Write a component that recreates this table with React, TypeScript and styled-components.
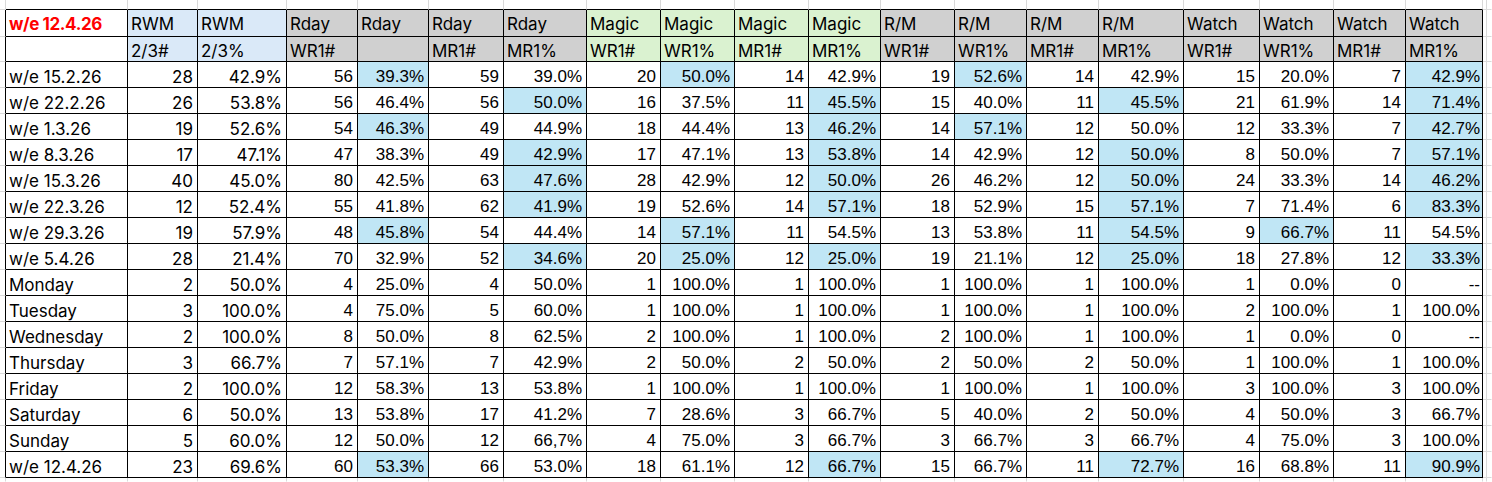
import React from "react";
import styled, { createGlobalStyle } from "styled-components";

const GlobalStyle = createGlobalStyle`
  html, body { margin: 0; padding: 0; background: #ffffff; }
  body { font-family: "Liberation Sans", Arial, sans-serif; color: #000; }
`;

const COLS = [122, 70, 89, 71, 71, 75, 83, 74, 74, 74, 72, 74, 72, 72, 85, 76, 74, 72, 77];
const TEMPLATE = `6px ${COLS.map((w) => `${w}px`).join(" ")} 4px 1fr`;

const GRID = "#d9d9d9";
const INK = "#000000";
const HL = "#c0e6f5";
const BLUE_HEAD = "#dae9f8";
const GREEN_HEAD = "#daf2d0";
const GRAY_HEAD = "#d0d0d0";

type Edge = "line" | "grid" | "none";
const edge = (e?: Edge) => (e === "line" ? INK : e === "grid" ? GRID : "transparent");

const Sheet = styled.div`
  display: flex;
  flex-direction: column;
  width: 1492px;
  height: 482px;
  overflow: hidden;
`;

const Row = styled.div<{ $h: number | "fill" }>`
  display: grid;
  grid-template-columns: ${TEMPLATE};
  flex: ${(p) => (p.$h === "fill" ? "1 1 auto" : "none")};
  height: ${(p) => (p.$h === "fill" ? "auto" : `${p.$h}px`)};
`;

const Gutter = styled.div<{ $right?: Edge; $bottom?: Edge }>`
  box-sizing: border-box;
  border-right: 1px solid ${(p) => edge(p.$right)};
  border-bottom: 1px solid ${(p) => edge(p.$bottom)};
`;

type Face = "aptos" | "arial";

const Cell = styled.div<{
  $bg?: string;
  $align?: "left" | "right";
  $face?: Face;
  $pb?: number;
  $pr?: number;
  $title?: boolean;
}>`
  box-sizing: border-box;
  border-right: 1px solid ${INK};
  border-bottom: 1px solid ${INK};
  background: ${(p) => p.$bg ?? "#ffffff"};
  display: flex;
  align-items: flex-end;
  justify-content: ${(p) => (p.$align === "right" ? "flex-end" : "flex-start")};
  padding: 0 ${(p) => p.$pr ?? 4}px ${(p) => p.$pb ?? 0}px 3px;
  white-space: nowrap;
  overflow: hidden;
  line-height: 20px;
  font-family: ${(p) =>
    p.$face === "arial"
      ? `"Liberation Sans", Arial, sans-serif`
      : `Inter, "Noto Sans", sans-serif`};
  font-size: 17px;
  font-weight: ${(p) => (p.$title ? 700 : 400)};
  letter-spacing: ${(p) => (p.$title ? "-0.4px" : "normal")};
  color: ${(p) => (p.$title ? "#ff0000" : "#000000")};
`;

const GROUP_BG = [
  "#ffffff",
  BLUE_HEAD, BLUE_HEAD,
  GRAY_HEAD, GRAY_HEAD, GRAY_HEAD, GRAY_HEAD,
  GREEN_HEAD, GREEN_HEAD, GREEN_HEAD, GREEN_HEAD,
  GRAY_HEAD, GRAY_HEAD, GRAY_HEAD, GRAY_HEAD,
  GRAY_HEAD, GRAY_HEAD, GRAY_HEAD, GRAY_HEAD,
];

const HEAD1 = [
  "w/e 12.4.26",
  "RWM", "RWM",
  "Rday", "Rday", "Rday", "Rday",
  "Magic", "Magic", "Magic", "Magic",
  "R/M", "R/M", "R/M", "R/M",
  "Watch", "Watch", "Watch", "Watch",
];

const HEAD2 = [
  "",
  "2/3#", "2/3%",
  "WR1#", "", "MR1#", "MR1%",
  "WR1#", "WR1%", "MR1#", "MR1%",
  "WR1#", "WR1%", "MR1#", "MR1%",
  "WR1#", "WR1%", "MR1#", "MR1%",
];

// "*" prefix marks a highlighted (light blue) cell
const ROWS: string[][] = [
  ["w/e 15.2.26", "28", "42.9%", "56", "*39.3%", "59", "39.0%", "20", "*50.0%", "14", "42.9%", "19", "*52.6%", "14", "42.9%", "15", "20.0%", "7", "*42.9%"],
  ["w/e 22.2.26", "26", "53.8%", "56", "46.4%", "56", "*50.0%", "16", "37.5%", "11", "*45.5%", "15", "40.0%", "11", "*45.5%", "21", "61.9%", "14", "*71.4%"],
  ["w/e 1.3.26", "19", "52.6%", "54", "*46.3%", "49", "44.9%", "18", "44.4%", "13", "*46.2%", "14", "*57.1%", "12", "50.0%", "12", "33.3%", "7", "*42.7%"],
  ["w/e 8.3.26", "17", "47.1%", "47", "38.3%", "49", "*42.9%", "17", "47.1%", "13", "*53.8%", "14", "42.9%", "12", "*50.0%", "8", "50.0%", "7", "*57.1%"],
  ["w/e 15.3.26", "40", "45.0%", "80", "42.5%", "63", "*47.6%", "28", "42.9%", "12", "*50.0%", "26", "46.2%", "12", "*50.0%", "24", "33.3%", "14", "*46.2%"],
  ["w/e 22.3.26", "12", "52.4%", "55", "41.8%", "62", "*41.9%", "19", "52.6%", "14", "*57.1%", "18", "52.9%", "15", "*57.1%", "7", "71.4%", "6", "*83.3%"],
  ["w/e 29.3.26", "19", "57.9%", "48", "*45.8%", "54", "44.4%", "14", "*57.1%", "11", "54.5%", "13", "53.8%", "11", "*54.5%", "9", "*66.7%", "11", "54.5%"],
  ["w/e 5.4.26", "28", "21.4%", "70", "32.9%", "52", "*34.6%", "20", "*25.0%", "12", "*25.0%", "19", "21.1%", "12", "*25.0%", "18", "27.8%", "12", "*33.3%"],
  ["Monday", "2", "50.0%", "4", "25.0%", "4", "50.0%", "1", "100.0%", "1", "100.0%", "1", "100.0%", "1", "100.0%", "1", "0.0%", "0", "--"],
  ["Tuesday", "3", "100.0%", "4", "75.0%", "5", "60.0%", "1", "100.0%", "1", "100.0%", "1", "100.0%", "1", "100.0%", "2", "100.0%", "1", "100.0%"],
  ["Wednesday", "2", "100.0%", "8", "50.0%", "8", "62.5%", "2", "100.0%", "1", "100.0%", "2", "100.0%", "1", "100.0%", "1", "0.0%", "0", "--"],
  ["Thursday", "3", "66.7%", "7", "57.1%", "7", "42.9%", "2", "50.0%", "2", "50.0%", "2", "50.0%", "2", "50.0%", "1", "100.0%", "1", "100.0%"],
  ["Friday", "2", "100.0%", "12", "58.3%", "13", "53.8%", "1", "100.0%", "1", "100.0%", "1", "100.0%", "1", "100.0%", "3", "100.0%", "3", "100.0%"],
  ["Saturday", "6", "50.0%", "13", "53.8%", "17", "41.2%", "7", "28.6%", "3", "66.7%", "5", "40.0%", "2", "50.0%", "4", "50.0%", "3", "66.7%"],
  ["Sunday", "5", "60.0%", "12", "50.0%", "12", "66,7%", "4", "75.0%", "3", "66.7%", "3", "66.7%", "3", "66.7%", "4", "75.0%", "3", "100.0%"],
  ["w/e 12.4.26", "23", "69.6%", "60", "*53.3%", "66", "53.0%", "18", "61.1%", "12", "*66.7%", "15", "66.7%", "11", "*72.7%", "16", "68.8%", "11", "*90.9%"],
];

const faceFor = (col: number): Face => (col <= 2 ? "aptos" : "arial");
const padRight = (col: number) => (col === 18 ? 2 : 4);

const TableRow: React.FC<{ h: number; children: React.ReactNode }> = ({ h, children }) => (
  <Row $h={h}>
    <Gutter $right="line" $bottom="grid" />
    {children}
    <Gutter $right="grid" $bottom="grid" />
    <Gutter $right="none" $bottom="grid" />
  </Row>
);

export default function App() {
  return (
    <>
      <GlobalStyle />
      <Sheet>
        <Row $h={10}>
          <Gutter $right="grid" $bottom="grid" />
          {COLS.map((_, i) => (
            <Gutter key={i} $right="grid" $bottom="line" />
          ))}
          <Gutter $right="grid" $bottom="grid" />
          <Gutter $right="none" $bottom="grid" />
        </Row>

        <TableRow h={27}>
          {HEAD1.map((t, i) => (
            <Cell key={i} $bg={GROUP_BG[i]} $face="aptos" $pb={2} $title={i === 0}>
              {t}
            </Cell>
          ))}
        </TableRow>

        <TableRow h={25}>
          {HEAD2.map((t, i) => (
            <Cell key={i} $bg={GROUP_BG[i]} $face="aptos" $pb={0}>
              {t}
            </Cell>
          ))}
        </TableRow>

        {ROWS.map((row, r) => (
          <TableRow key={r} h={26}>
            {row.map((v, c) => {
              const hl = v.startsWith("*");
              const text = hl ? v.slice(1) : v;
              return c === 0 ? (
                <Cell key={c} $face="aptos">
                  {text}
                </Cell>
              ) : (
                <Cell
                  key={c}
                  $align="right"
                  $face={faceFor(c)}
                  $pr={padRight(c)}
                  $bg={hl ? HL : undefined}
                >
                  {text}
                </Cell>
              );
            })}
          </TableRow>
        ))}

        <Row $h="fill">
          <Gutter $right="grid" />
          {COLS.map((_, i) => (
            <Gutter key={i} $right="grid" />
          ))}
          <Gutter $right="grid" />
          <Gutter $right="none" />
        </Row>
      </Sheet>
    </>
  );
}
